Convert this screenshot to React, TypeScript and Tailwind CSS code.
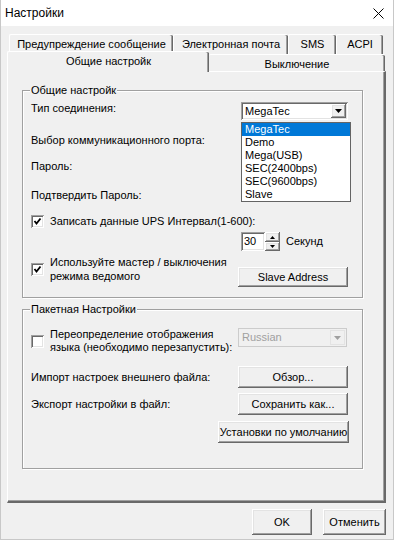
const RAISED =
  "shadow-[inset_-1px_-1px_0_#696969,inset_1px_1px_0_#fff,inset_-2px_-2px_0_#a0a0a0,inset_2px_2px_0_#e3e3e3]";
const SUNKEN =
  "shadow-[inset_1px_1px_0_#a0a0a0,inset_-1px_-1px_0_#fff,inset_2px_2px_0_#696969,inset_-2px_-2px_0_#e3e3e3]";

const OPTIONS = ["MegaTec", "Demo", "Mega(USB)", "SEC(2400bps)", "SEC(9600bps)", "Slave"];

function Btn({ label, className = "" }: { label: string; className?: string }) {
  return (
    <div className={`flex items-center justify-center bg-[#f0f0f0] ${RAISED} ${className}`}>
      {label}
    </div>
  );
}

function Check({ checked }: { checked: boolean }) {
  return (
    <div className={`h-[13px] w-[13px] shrink-0 bg-white ${SUNKEN}`}>
      {checked && (
        <svg width="13" height="13" viewBox="0 0 13 13">
          <path d="M3.5 6 L5.5 8.5 L9.5 3.5" fill="none" stroke="#000" strokeWidth="1.8" />
        </svg>
      )}
    </div>
  );
}

function Arrow({ color = "#000" }: { color?: string }) {
  return (
    <svg width="7" height="4" viewBox="0 0 7 4">
      <path d="M0 0 H7 L3.5 4 Z" fill={color} />
    </svg>
  );
}

function Group({ title, className = "", children }: { title: string; className?: string; children: React.ReactNode }) {
  return (
    <div
      className={`relative w-[341px] border border-[#a0a0a0] pl-[8px] shadow-[inset_1px_1px_0_#fff,1px_1px_0_#fff] ${className}`}
    >
      <span className="absolute left-[7px] top-[-7px] bg-[#f0f0f0] px-[1px] leading-[13px]">{title}</span>
      {children}
    </div>
  );
}

export default function App() {
  return (
    <div className="h-[540px] w-[394px] overflow-hidden border-x border-b border-[#c8c8c8] bg-[#f0f0f0] font-['Liberation_Sans',Arial,sans-serif] text-[11px] leading-[13px] text-black">
      {/* title bar */}
      <div className="flex h-[26px] items-center justify-between bg-white pl-[4px] pr-[9px] text-[12px]">
        <span>Настройки</span>
        <svg width="11" height="11" viewBox="0 0 11 11">
          <path d="M0.5 0.5 L10.5 10.5 M10.5 0.5 L0.5 10.5" stroke="#000" strokeWidth="1" />
        </svg>
      </div>

      {/* tab headers, back row */}
      <div className="mt-[8px] flex h-[20px] pl-[8px]">
        {[
          ["Предупреждение сообщение", "w-[164px]"],
          ["Электронная почта", "w-[115px]"],
          ["SMS", "w-[48px]"],
          ["ACPI", "w-[47px]"],
        ].map(([t, w]) => (
          <div
            key={t}
            className={`flex h-[20px] items-start justify-center rounded-t-[2px] border-l border-t border-white pt-[3px] shadow-[inset_-1px_0_0_#696969,inset_-2px_0_0_#a0a0a0] ${w}`}
          >
            {t}
          </div>
        ))}
      </div>

      {/* tab headers, front row */}
      <div className="relative -mt-[3px] flex h-[20px] items-start pl-[6px]">
        <div className="relative z-10 flex h-[21px] w-[202px] items-start justify-center rounded-t-[2px] border-l border-t border-white bg-[#f0f0f0] pt-[3px] shadow-[inset_-1px_0_0_#696969,inset_-2px_0_0_#a0a0a0]">
          Общие настройк
        </div>
        <div className="mt-[3px] flex h-[17px] w-[176px] items-start justify-center rounded-t-[2px] border-t border-white bg-[#f0f0f0] pt-[3px] shadow-[inset_-1px_0_0_#696969,inset_-2px_0_0_#a0a0a0]">
          Выключение
        </div>
      </div>

      {/* tab page */}
      <div className="ml-[6px] h-[432px] w-[379px] border-l border-t border-white border-b-2 border-r-2 border-b-[#696969] border-r-[#696969] pl-[14px] pt-[18px] shadow-[inset_-1px_-1px_0_#a0a0a0]">
        <Group title="Общие настройк">
          <div className="mt-[11px] flex h-[18px] items-start">
            <span className="w-[210px]">Тип соединения:</span>
            <div className="relative">
              <div className={`flex h-[18px] w-[107px] items-center justify-between bg-white pl-[4px] pr-[2px] ${SUNKEN}`}>
                <span>MegaTec</span>
                <div className={`flex h-[14px] w-[15px] items-center justify-center bg-[#f0f0f0] ${RAISED}`}>
                  <Arrow />
                </div>
              </div>
              <div className="absolute left-0 top-[20px] z-20 w-[110px] border border-[#646464] bg-white">
                {OPTIONS.map((o, i) => (
                  <div
                    key={o}
                    className={`h-[13px] pl-[3px] leading-[13px] ${i === 0 ? "bg-[#0078d7] text-white" : ""}`}
                  >
                    {o}
                  </div>
                ))}
              </div>
            </div>
          </div>
          <div className="mt-[14px] h-[13px]">Выбор коммуникационного порта:</div>
          <div className="mt-[13px] h-[13px]">Пароль:</div>
          <div className="mt-[16px] h-[13px]">Подтвердить Пароль:</div>
          <div className="mt-[12px] flex h-[14px] items-center gap-[6px]">
            <Check checked />
            <span>Записать данные UPS Интервал(1-600):</span>
          </div>
          <div className="ml-[210px] mt-[4px] flex h-[19px] items-center">
            <div className={`flex h-[19px] w-[24px] items-center bg-white pl-[3px] ${SUNKEN}`}>30</div>
            <div className="flex h-[19px] w-[15px] flex-col">
              <div className={`flex h-[10px] items-center justify-center bg-[#f0f0f0] ${RAISED}`}>
                <svg width="5" height="3" viewBox="0 0 5 3">
                  <path d="M0 3 H5 L2.5 0 Z" fill="#000" />
                </svg>
              </div>
              <div className={`flex h-[9px] items-center justify-center bg-[#f0f0f0] ${RAISED}`}>
                <svg width="5" height="3" viewBox="0 0 5 3">
                  <path d="M0 0 H5 L2.5 3 Z" fill="#000" />
                </svg>
              </div>
            </div>
            <span className="ml-[6px]">Секунд</span>
          </div>
          <div className="mt-[4px] flex h-[32px] items-start">
            <div className="flex h-[28px] w-[207px] items-center gap-[6px]">
              <Check checked />
              <span className="leading-[14px]">
                Используйте мастер / выключения
                <br />
                режима ведомого
              </span>
            </div>
            <Btn label="Slave Address" className="mt-[12px] h-[20px] w-[110px]" />
          </div>
          <div className="h-[10px]" />
        </Group>

        <Group title="Пакетная Настройки" className="mt-[11px]">
          <div className="mt-[18px] flex h-[26px] items-start">
            <div className="flex h-[26px] w-[207px] items-center gap-[6px]">
              <Check checked={false} />
              <span>
                Переопределение отображения
                <br />
                языка (необходимо перезапустить):
              </span>
            </div>
            <div className="flex h-[19px] w-[109px] items-center justify-between border border-[#cccccc] bg-[#f0f0f0] pl-[3px] pr-[1px] text-[#a0a0a0]">
              <span>Russian</span>
              <div className="flex h-[15px] w-[15px] items-center justify-center border border-[#e3e3e3]">
                <Arrow color="#a0a0a0" />
              </div>
            </div>
          </div>
          <div className="mt-[12px] flex h-[22px] items-center">
            <span className="w-[207px]">Импорт настроек внешнего файла:</span>
            <Btn label="Обзор..." className="h-[22px] w-[110px]" />
          </div>
          <div className="mt-[5px] flex h-[22px] items-center">
            <span className="w-[207px]">Экспорт настройки в файл:</span>
            <Btn label="Сохранить как..." className="h-[22px] w-[110px]" />
          </div>
          <div className="mt-[6px] flex h-[22px] items-center">
            <Btn label="Установки по умолчанию" className="ml-[187px] h-[22px] w-[131px]" />
          </div>
          <div className="h-[25px]" />
        </Group>
      </div>

      {/* dialog buttons */}
      <div className="mt-[6px] flex justify-end gap-[11px] pr-[7px]">
        <Btn label="OK" className="h-[26px] w-[60px]" />
        <Btn label="Отменить" className="h-[26px] w-[63px]" />
      </div>
    </div>
  );
}
